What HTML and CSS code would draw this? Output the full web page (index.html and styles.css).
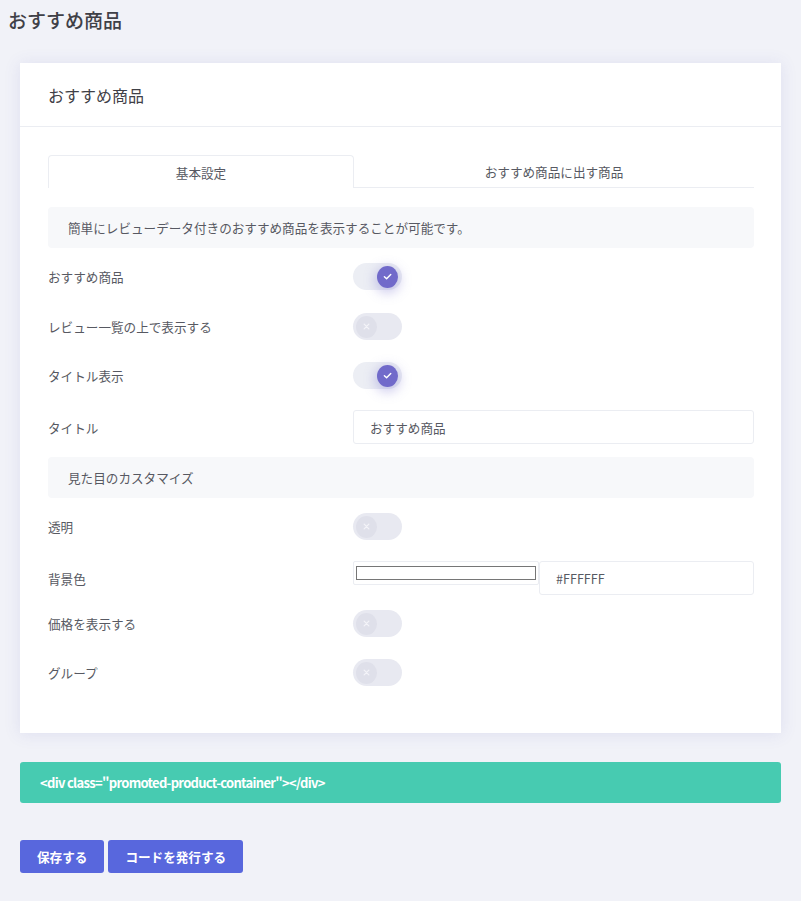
FILE: index.html
```html
<!DOCTYPE html>
<html lang="ja">
<head>
<meta charset="utf-8">
<link rel="stylesheet" href="styles.css">
</head>
<body>
<h1 class="page-title">おすすめ商品</h1>
<div class="card">
  <div class="card-head">おすすめ商品</div>
  <div class="card-body">
    <div class="tabs">
      <div class="tab active">基本設定</div>
      <div class="tab">おすすめ商品に出す商品</div>
    </div>
    <div class="note">簡単にレビューデータ付きのおすすめ商品を表示することが可能です。</div>
    <div class="row r1"><div class="label">おすすめ商品</div><div class="toggle on"><span class="knob"><svg viewBox="0 0 10 10"><path d="M2.6 5.2 L4.3 6.8 L7.5 3.5"/></svg></span></div></div>
    <div class="row r2"><div class="label">レビュー一覧の上で表示する</div><div class="toggle"><span class="knob"><svg viewBox="0 0 10 10"><path d="M3.2 3.2 L6.8 6.8 M6.8 3.2 L3.2 6.8"/></svg></span></div></div>
    <div class="row r3"><div class="label">タイトル表示</div><div class="toggle on"><span class="knob"><svg viewBox="0 0 10 10"><path d="M2.6 5.2 L4.3 6.8 L7.5 3.5"/></svg></span></div></div>
    <div class="row r4"><div class="label">タイトル</div><div class="input">おすすめ商品</div></div>
    <div class="section">見た目のカスタマイズ</div>
    <div class="row r5"><div class="label">透明</div><div class="toggle"><span class="knob"><svg viewBox="0 0 10 10"><path d="M3.2 3.2 L6.8 6.8 M6.8 3.2 L3.2 6.8"/></svg></span></div></div>
    <div class="row r6"><div class="label">背景色</div><div class="color-wrap"><div class="color-box"><span class="swatch"></span></div><div class="input hex">#FFFFFF</div></div></div>
    <div class="row r7"><div class="label">価格を表示する</div><div class="toggle"><span class="knob"><svg viewBox="0 0 10 10"><path d="M3.2 3.2 L6.8 6.8 M6.8 3.2 L3.2 6.8"/></svg></span></div></div>
    <div class="row r8"><div class="label">グループ</div><div class="toggle"><span class="knob"><svg viewBox="0 0 10 10"><path d="M3.2 3.2 L6.8 6.8 M6.8 3.2 L3.2 6.8"/></svg></span></div></div>
  </div>
</div>
<div class="code">&lt;div class="promoted-product-container"&gt;&lt;/div&gt;</div>
<div class="actions">
  <button class="btn">保存する</button>
  <button class="btn">コードを発行する</button>
</div>
</body>
</html>
```
FILE: styles.css
```css
* { box-sizing: border-box; }
body {
  margin: 0;
  background: #f1f2f8;
  font-family: "Noto Sans CJK JP", "Noto Sans", sans-serif;
  color: #575962;
  width: 801px;
  height: 901px;
  overflow: hidden;
}
.page-title {
  margin: 0;
  padding: 6px 0 0 8px;
  height: 63px;
  font-size: 19px;
  font-weight: 500;
  color: #3f4047;
  line-height: 28px;
}
.card {
  margin: 0 20px;
  background: #fff;
  box-shadow: 0 1px 15px 1px rgba(81, 77, 172, 0.10);
}
.card-head {
  height: 64px;
  border-bottom: 1px solid #ebedf2;
  padding: 0 28px;
  display: flex;
  align-items: center;
  font-size: 16px;
  font-weight: 400;
  color: #3f4047;
}
.card-body {
  padding: 28px 27px 47px 28px;
}
.tabs {
  display: flex;
  height: 33px;
}
.tab {
  flex: 1;
  display: flex;
  align-items: center;
  justify-content: center;
  font-size: 12.6px;
  color: #575962;
  border-bottom: 1px solid #ebedf2;
}
.tab.active {
  flex: 0 0 306px;
  border: 1px solid #ebedf2;
  border-bottom: none;
  border-radius: 4px 4px 0 0;
}
.note {
  margin-top: 19px;
  height: 41px;
  background: #f7f8fa;
  border-radius: 4px;
  padding: 0 20px;
  display: flex;
  align-items: center;
  font-size: 12.6px;
}
.row {
  display: flex;
  align-items: center;
}
.label {
  flex: 0 0 305px;
  font-size: 12.6px;
  color: #575962;
}
.r1 { margin-top: 15px; }
.r2 { margin-top: 23px; }
.r3 { margin-top: 22px; }
.r4 { margin-top: 21px; }
.r5 { margin-top: 15px; }
.r6 { margin-top: 21px; }
.r7 { margin-top: 15px; }
.r8 { margin-top: 22px; }
.toggle {
  position: relative;
  width: 49px;
  height: 27px;
  border-radius: 14px;
  background: #e8e9f1;
}
.knob {
  position: absolute;
  top: 2.5px;
  left: 3px;
  width: 21px;
  height: 22px;
  border-radius: 50%;
  background: #dfe0ea;
  display: flex;
  align-items: center;
  justify-content: center;
}
.knob svg {
  width: 13px;
  height: 13px;
  fill: none;
  stroke: #f3f3f8;
  stroke-width: 1;
  stroke-linecap: round;
  stroke-linejoin: round;
}
.toggle.on {
  background: #eceef4;
}
.toggle.on .knob {
  left: auto;
  right: 4px;
  background: #716aca;
  box-shadow: 0 3px 12px 2px rgba(113, 106, 202, 0.35);
}
.toggle.on .knob svg { stroke: #fff; stroke-width: 1.1; }
.input {
  flex: 1;
  height: 34px;
  border: 1px solid #ebedf2;
  border-radius: 3px;
  padding: 0 16px;
  display: flex;
  align-items: center;
  font-size: 12.6px;
  color: #575962;
}
.section {
  margin-top: 13px;
  height: 41px;
  background: #f7f8fa;
  border-radius: 4px;
  padding: 0 20px;
  display: flex;
  align-items: center;
  font-size: 12.6px;
}
.color-wrap {
  flex: 1;
  display: flex;
  align-items: flex-start;
}
.color-box {
  width: 186px;
  height: 24px;
  border: 1px solid #ebedf2;
  border-radius: 2px;
  padding: 4px 2px;
}
.swatch {
  display: block;
  height: 100%;
  border: 1px solid #767676;
  background: #fff;
}
.input.hex {
  height: 34px;
}
.code {
  margin: 29px 20px 0;
  height: 41px;
  background: #47cbb1;
  border-radius: 3px;
  padding: 0 20px;
  display: flex;
  align-items: center;
  color: #fff;
  font-weight: 700;
  font-size: 13px;
  letter-spacing: -0.7px;
}
.actions {
  margin: 37px 20px 0;
  display: flex;
  gap: 4px;
}
.btn {
  height: 33px;
  padding: 0 17px;
  background: #5867dd;
  border: none;
  border-radius: 3px;
  color: #fff;
  font-family: inherit;
  font-size: 12.6px;
  font-weight: 700;
}
```
